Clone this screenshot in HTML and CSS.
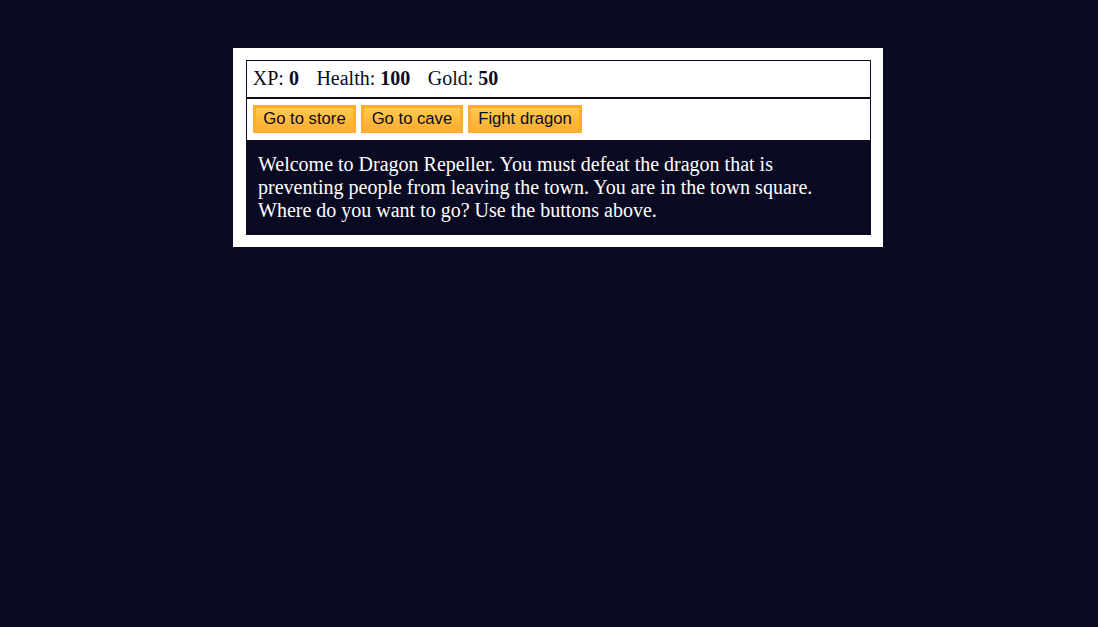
FILE: index.html
```html
<!DOCTYPE html>
<html lang="en">
<head>
<meta charset="utf-8">
<title>RPG - Dragon Repeller</title>
<link rel="stylesheet" href="styles.css">
</head>
<body>
<div class="game">
  <div class="stats">
    <span class="stat">XP: <strong>0</strong></span>
    <span class="stat">Health: <strong>100</strong></span>
    <span class="stat">Gold: <strong>50</strong></span>
  </div>
  <div class="controls">
    <button class="btn">Go to store</button>
    <button class="btn">Go to cave</button>
    <button class="btn">Fight dragon</button>
  </div>
  <div class="text">Welcome to Dragon Repeller. You must defeat the dragon that is preventing people from leaving the town. You are in the town square. Where do you want to go? Use the buttons above.</div>
</div>
</body>
</html>
```

FILE: styles.css
```css
html, body {
  background-color: #0a0a23;
}
body {
  margin: 10px 10px 10px 28px;
  font-family: "Liberation Serif", "Times New Roman", serif;
  font-size: 20px;
}
.game {
  max-width: 625px;
  background-color: #ffffff;
  color: #ffffff;
  margin: 37.5px auto 0;
  padding: 12.5px;
}
.stats, .controls {
  border: 1px solid #0a0a23;
  padding: 6.25px;
  color: #0a0a23;
}
.stat {
  padding-right: 12.5px;
}
.btn {
  cursor: pointer;
  color: #0a0a23;
  background-color: #feac32;
  background-image: linear-gradient(#fecc4c, #ffac33);
  border: 3.75px solid #feac32;
  font-family: "Liberation Sans", Arial, sans-serif;
  font-size: 16.67px;
  padding: 1.25px 7.5px;
}
.text {
  background-color: #0a0a23;
  color: #ffffff;
  padding: 12.5px;
}
```
